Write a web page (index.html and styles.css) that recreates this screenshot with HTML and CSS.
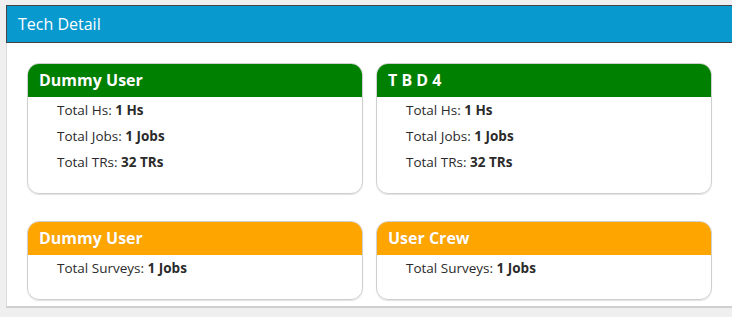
FILE: index.html
```html
<!DOCTYPE html>
<html lang="en">
<head>
    <meta charset="UTF-8">
    <meta name="viewport" content="width=device-width, initial-scale=1.0">
    <title>Tech Detail</title>
    <link rel="stylesheet" href="styles.css">
</head>
<body>
    <div class="panel">
        <div class="panel-heading">Tech Detail</div>
        <div class="panel-body">
            <div class="tech-card green">
                <div class="tech-title">Dummy User</div>
                <div class="tech-info">
                    <p>Total Hs: <b>1 Hs</b></p>
                    <p>Total Jobs: <b>1 Jobs</b></p>
                    <p>Total TRs: <b>32 TRs</b></p>
                </div>
            </div>
            <div class="tech-card green">
                <div class="tech-title">T B D 4</div>
                <div class="tech-info">
                    <p>Total Hs: <b>1 Hs</b></p>
                    <p>Total Jobs: <b>1 Jobs</b></p>
                    <p>Total TRs: <b>32 TRs</b></p>
                </div>
            </div>
            <div class="tech-card orange">
                <div class="tech-title">Dummy User</div>
                <div class="tech-info">
                    <p>Total Surveys: <b>1 Jobs</b></p>
                </div>
            </div>
            <div class="tech-card orange">
                <div class="tech-title">User Crew</div>
                <div class="tech-info">
                    <p>Total Surveys: <b>1 Jobs</b></p>
                </div>
            </div>
        </div>
    </div>
</body>
</html>
```

FILE: styles.css
```css
body {
    font-family: "Open Sans", Arial, sans-serif;
    background-color: #efefef;
    margin: 0;
    padding: 0;
    overflow: hidden;
    color: #2b2b2b;
}
.panel {
    margin: 5px -20px 0 6px;
    background-color: #fff;
    border-left: 1px solid #dcdcdc;
    border-bottom: 2px solid #cfcfcf;
}
.panel-heading {
    background-color: #0899cf;
    color: #fff;
    font-size: 16px;
    height: 36px;
    line-height: 36px;
    padding-left: 11px;
    border: 1px solid #444;
    border-right: none;
    margin-left: -1px;
}
.panel-body {
    display: grid;
    grid-template-columns: 336px 336px;
    column-gap: 13px;
    row-gap: 27px;
    padding: 20px 0 6px 20px;
}
.tech-card {
    border: 1px solid #cfcfcf;
    border-radius: 12px;
    box-shadow: 0 1px 1px rgba(0, 0, 0, 0.12);
    overflow: hidden;
}
.tech-title {
    color: #fff;
    font-weight: bold;
    font-size: 16px;
    height: 33px;
    line-height: 33px;
    padding-left: 12px;
    margin: -1px -1px 0 -1px;
    padding-top: 1px;
    text-shadow: 0 0 1px rgba(0, 0, 0, 0.15);
}
.green .tech-title {
    background-color: #008000;
}
.orange .tech-title {
    background-color: #ffa500;
}
.tech-info {
    padding: 0 0 18px 29px;
    font-size: 13.5px;
}
.tech-info p {
    margin: 0;
    line-height: 26px;
}
```
